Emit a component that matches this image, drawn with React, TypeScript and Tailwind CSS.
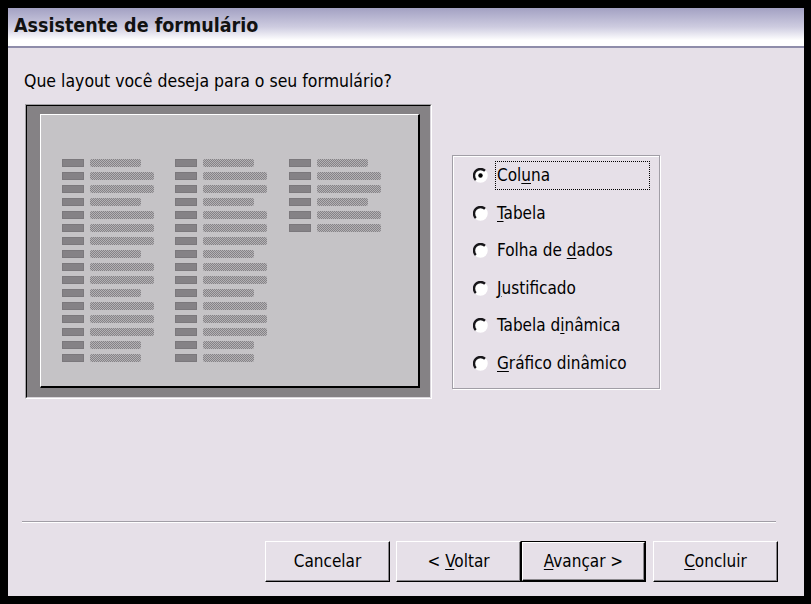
import type { ReactNode } from 'react'

// s = barra curta, l = barra longa
const LINHAS = ['s', 'l', 'l', 's', 'l', 'l', 'l', 's', 'l', 'l', 's', 'l', 'l', 'l', 's', 's']
const COLUNAS = [
  { w: 'w-[113px]', linhas: LINHAS },
  { w: 'w-[114px]', linhas: LINHAS },
  { w: 'w-[114px]', linhas: LINHAS.slice(0, 6) },
]

const OPCOES: { pre: string; key: string; pos: string }[] = [
  { pre: 'Col', key: 'u', pos: 'na' },
  { pre: '', key: 'T', pos: 'abela' },
  { pre: 'Folha de ', key: 'd', pos: 'ados' },
  { pre: '', key: 'J', pos: 'ustificado' },
  { pre: 'Tabela d', key: 'i', pos: 'nâmica' },
  { pre: '', key: 'G', pos: 'ráfico dinâmico' },
]

const UI_FONT = "font-['DejaVu_Sans_Condensed','DejaVu_Sans',sans-serif]"

function Preview() {
  return (
    <div className="h-[295px] w-[407px] shrink-0 border border-t-[#a3a1a5] border-l-[#a3a1a5] border-r-white border-b-white">
      <div className="h-full border border-t-black border-l-black border-r-[#d9d5db] border-b-[#d9d5db] bg-[#858285] pt-[8px] pl-[13px] pr-[10px] pb-[9px]">
        <div className="flex h-full border-t border-l border-white border-r-2 border-b-2 border-r-black border-b-black bg-[#c5c3c6] pt-[44px] pl-[21px]">
          {COLUNAS.map((col, i) => (
            <div key={i} className={`flex flex-col gap-[5px] ${col.w}`}>
              {col.linhas.map((t, j) => (
                <div key={j} className="flex h-[8px] items-center gap-[6px]">
                  <div className="h-[8px] w-[22px] border border-[#7b787c] bg-[#858286]" />
                  <div
                    className={`h-[8px] rounded-[2px] bg-[repeating-conic-gradient(#858286_0%_25%,#b4b2b5_0%_50%)] bg-size-[2px_2px] ${
                      t === 'l' ? 'w-[64px]' : 'w-[51px]'
                    }`}
                  />
                </div>
              ))}
            </div>
          ))}
        </div>
      </div>
    </div>
  )
}

function Radio({ checked }: { checked?: boolean }) {
  return (
    <svg width="15" height="15" viewBox="0 0 15 15" className="shrink-0">
      <circle cx="7.5" cy="7.5" r="6.5" fill="#ffffff" />
      <path d="M12.1 2.9 A6.5 6.5 0 0 0 2.9 12.1" stroke="#18161a" strokeWidth="2.4" fill="none" />
      <path d="M12.1 2.9 A6.5 6.5 0 0 1 2.9 12.1" stroke="#ffffff" strokeWidth="1.5" fill="none" />
      {checked && <circle cx="7.5" cy="7.5" r="2.2" fill="#000" />}
    </svg>
  )
}

function Botao({ children, padrao }: { children: ReactNode; padrao?: boolean }) {
  const face = (
    <div className="flex h-full w-full items-center justify-center border-t border-l border-white border-r border-b border-r-black border-b-black bg-[#e6e0e8] shadow-[inset_-1px_-1px_0_#8a878c] text-[17px] leading-none text-black">
      <span>{children}</span>
    </div>
  )
  if (padrao) {
    return <div className="h-[41px] w-[125px] border border-black">{face}</div>
  }
  return <div className="h-[41px] w-[125px]">{face}</div>
}

export default function App() {
  return (
    <div className={`h-[604px] w-[811px] bg-black pt-[8px] pl-[8px] pr-[7px] pb-[8px] ${UI_FONT}`}>
      <div className="flex h-full flex-col bg-[#e6e0e8] text-black">
        {/* barra de título */}
        <div className="flex h-[40px] items-center border-b-2 border-[#8f8daa] bg-linear-to-b from-[#a3a1c3] via-[#cecce0] via-50% to-white to-85% pl-[6px] pb-[2px]">
          <span className="text-[19.5px] font-bold leading-none text-[#111]">Assistente de formulário</span>
        </div>

        <div className="mt-[23px] pl-[16px] text-[17.5px] leading-[20px]">
          Que layout você deseja para o seu formulário?
        </div>

        <div className="mt-[13px] flex items-start pl-[17px]">
          <Preview />
          <div className="mt-[51px] ml-[20px] flex h-[234px] w-[208px] flex-col gap-[8.5px] border border-[#a19ea6] pt-[5px] pl-[20px] shadow-[inset_1px_1px_0_white,1px_1px_0_white]">
            {OPCOES.map((op, i) => (
              <div key={i} className="flex h-[29px] items-center gap-[7px]">
                <Radio checked={i === 0} />
                <div
                  className={`flex h-[29px] w-[155px] items-center border border-dotted pl-[1px] text-[17px] leading-none ${
                    i === 0 ? 'border-black' : 'border-transparent'
                  }`}
                >
                  <span>
                    {op.pre}
                    <u className="underline-offset-2">{op.key}</u>
                    {op.pos}
                  </span>
                </div>
              </div>
            ))}
          </div>
        </div>

        {/* rodapé */}
        <div className="mt-auto pb-[14px]">
          <div className="ml-[14px] mr-[28px] h-[2px] border-t border-b border-t-[#a19ea6] border-b-white" />
          <div className="mt-[18px] mr-[26px] flex justify-end">
            <Botao>Cancelar</Botao>
            <div className="ml-[6px]">
              <Botao>
                &lt; <u className="underline-offset-2">V</u>oltar
              </Botao>
            </div>
            <Botao padrao>
              <u className="underline-offset-2">A</u>vançar &gt;
            </Botao>
            <div className="ml-[7px]">
              <Botao>
                <u className="underline-offset-2">C</u>oncluir
              </Botao>
            </div>
          </div>
        </div>
      </div>
    </div>
  )
}
